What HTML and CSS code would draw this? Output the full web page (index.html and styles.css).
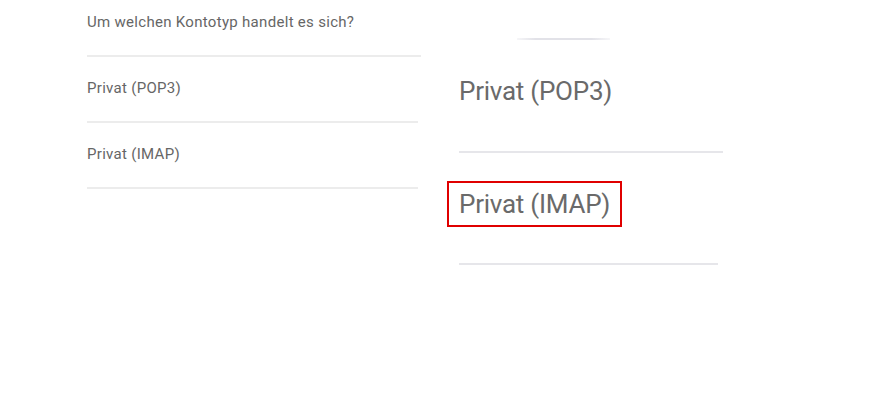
FILE: index.html
```html
<!DOCTYPE html>
<html lang="de">
<head>
<meta charset="utf-8">
<title>Kontotyp</title>
<link rel="stylesheet" href="styles.css">
</head>
<body>
<div class="page">
  <div class="list">
    <div class="row row-first">Um welchen Kontotyp handelt es sich?</div>
    <div class="row">Privat (POP3)</div>
    <div class="row">Privat (IMAP)</div>
  </div>
  <div class="zoomed">
    <div class="indicator"></div>
    <div class="big-item">Privat (POP3)</div>
    <div class="divider divider-a"></div>
    <div class="big-item highlight">Privat (IMAP)</div>
    <div class="divider divider-b"></div>
  </div>
</div>
</body>
</html>
```
FILE: styles.css
```css
html, body {
  margin: 0;
  padding: 0;
  background: #ffffff;
}

body {
  font-family: Roboto, "Noto Sans", "Liberation Sans", sans-serif;
}

.page {
  display: flex;
  align-items: flex-start;
  padding-left: 87px;
}

.list {
  width: 334px;
  display: flex;
  flex-direction: column;
}

.row {
  font-size: 15px;
  line-height: 20px;
  letter-spacing: 0.3px;
  color: #666666;
  padding: 21px 0 23px;
  border-bottom: 2px solid #ececec;
  width: 331px;
}

.row-first {
  padding-top: 12px;
  width: 334px;
}

.zoomed {
  margin-left: 26px;
  padding-left: 12px;
  display: flex;
  flex-direction: column;
  align-items: flex-start;
}

.indicator {
  margin-top: 38px;
  margin-left: 58px;
  width: 93px;
  height: 2px;
  background: linear-gradient(to right, rgba(225, 225, 232, 0.3), #e2e2e8 20%, #e2e2e8 80%, rgba(225, 225, 232, 0.3));
}

.big-item {
  font-size: 26px;
  line-height: 30px;
  letter-spacing: -0.25px;
  color: #6a6a6a;
  margin-top: 36px;
}

.highlight {
  margin-top: 28px;
  margin-left: -12px;
  padding: 6px 10px;
  border: 2px solid #e00000;
}

.divider {
  height: 2px;
  background: #e6e6ea;
}

.divider-a {
  margin-top: 45px;
  width: 264px;
}

.divider-b {
  margin-top: 36px;
  width: 259px;
}
```
